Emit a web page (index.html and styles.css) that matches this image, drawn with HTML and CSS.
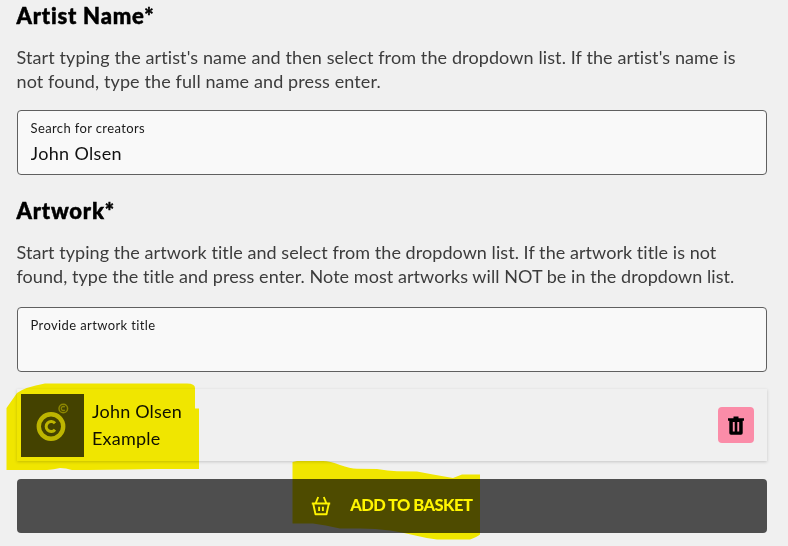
FILE: index.html
```html
<!DOCTYPE html>
<html lang="en">
  <head>
    <meta charset="UTF-8" />
    <meta name="viewport" content="width=device-width, initial-scale=1.0" />
    <title>Artwork Licence Request</title>
    <link rel="stylesheet" href="styles.css">
  </head>
  <body>
    <form class="artwork-form">
      <h2>Artist Name*</h2>
      <p class="help help-artist">
        Start typing the artist's name and then select from the dropdown list. If the artist's name is<br />
        not found, type the full name and press enter.
      </p>
      <div class="field">
        <label for="creator">Search for creators</label>
        <input type="text" id="creator" name="creator" value="John Olsen" />
      </div>

      <h2 class="heading-artwork">Artwork*</h2>
      <p class="help help-artwork">
        Start typing the artwork title and select from the dropdown list. If the artwork title is not<br />
        found, type the title and press enter. Note most artworks will NOT be in the dropdown list.
      </p>
      <div class="field">
        <label for="artwork">Provide artwork title</label>
        <input type="text" id="artwork" name="artwork" />
      </div>

      <div class="item">
        <svg class="thumb" viewBox="0 0 63 63">
          <rect width="63" height="63" fill="#444" />
          <g fill="none" stroke="#bdbdbd">
            <circle cx="30" cy="32.5" r="12.2" stroke-width="4.4" />
            <path d="M34 29.3a5 5 0 1 0 0 6.4" stroke-width="3" />
            <circle cx="42.3" cy="14.5" r="4.3" stroke="#8c8c8c" stroke-width="1.5" />
            <path d="M43.8 13.2a2 2 0 1 0 0 2.6" stroke="#8c8c8c" stroke-width="1.3" />
          </g>
        </svg>
        <div class="item-text">
          <div>John Olsen</div>
          <div>Example</div>
        </div>
        <button type="button" class="delete" aria-label="Delete">
          <svg width="16" height="19" viewBox="0 0 16 19">
            <path fill="#000" fill-rule="evenodd" d="M5.5 .5h5v1.7H16v2.6h-1.3V17q0 1.7-1.7 1.7H3Q1.3 18.700 1.3 17V4.800H0V2.200h5.500zM4.800 6v9.500h1.900V6zM9.300 6v9.500h1.900V6z" />
          </svg>
        </button>
      </div>

      <button type="submit" class="basket">
        <svg width="20" height="20" viewBox="0 0 20 20" fill="none" stroke="#fff" stroke-width="1.9" stroke-linejoin="round">
          <path d="M.8 7.5h18.400M2.200 7.500l2.300 10.700h11l2.300-10.700M4.600 7.500L7.200 1M15.400 7.500L12.800 1M8.100 10.700v4.300M11.900 10.700v4.300" />
        </svg>
        <span>ADD TO BASKET</span>
      </button>
    </form>

    <!-- Highlighter strokes -->
    <svg class="highlight" viewBox="0 0 788 546">
      <path d="M6.500 408L17 393Q25 387 45 383.500H187Q195 383.500 195 388V408.500H199V469L155 469Q100 470 72 470Q66 468 60 468Q54 469.500 47 470H6.500z" />
      <path d="M292.500 462L297 461H323Q330 461 340 465Q350 468.500 357 468.800L377 469Q388 471 397 471.200L417 471.500L433 474.500L453 478L462 474.500H480V534.500Q477 537 470 539.500H437Q425 538 413 535Q402 532 390 530.500Q375 528.500 360 528.500H340Q325 525 313 523.500H292.500z" />
    </svg>
  </body>
</html>
```

FILE: styles.css
```css
* {
  box-sizing: border-box;
}

body {
  margin: 0;
  height: 546px;
  overflow: hidden;
  background-color: #f0f0f0;
  font-family: Lato, "Open Sans", sans-serif;
  color: #111;
}

.artwork-form {
  display: flex;
  flex-direction: column;
  padding: 2px 21px 0 16.5px;
}

h2 {
  margin: 0;
  font-size: 22px;
  line-height: 28px;
  font-weight: 900;
  letter-spacing: 0.8px;
  -webkit-text-stroke: 0.5px #000;
  color: #000;
}

.heading-artwork {
  margin-top: 22px;
}

.help {
  margin: 16px 0 17px;
  font-size: 18px;
  line-height: 23.5px;
  color: #3c3c3c;
  white-space: nowrap;
}

.help-artist {
  letter-spacing: 0.11px;
}

.help-artwork {
  margin-bottom: 19px;
  letter-spacing: 0.055px;
}

.field {
  display: flex;
  flex-direction: column;
  height: 65px;
  padding: 9px 13px 0;
  border: 1px solid #606060;
  border-radius: 4px;
  background-color: #f9f9f9;
}

.field label {
  font-size: 13px;
  line-height: 17px;
  letter-spacing: 0.38px;
  color: #1a1a1a;
}

.field input {
  height: 24px;
  margin-top: 4px;
  padding: 0;
  border: 0;
  outline: 0;
  background: transparent;
  font-family: inherit;
  font-size: 18px;
  letter-spacing: 0.35px;
  color: #111;
}

.item {
  display: flex;
  align-items: center;
  height: 72px;
  margin-top: 17px;
  padding: 0 13.5px 0 4.5px;
  background-color: #f0f0f0;
  box-shadow: 0 1px 3px rgba(0, 0, 0, 0.18);
}

.thumb {
  width: 63px;
  height: 63px;
}

.item-text {
  flex: 1;
  margin-left: 8px;
  font-size: 18px;
  line-height: 27px;
  letter-spacing: 0.2px;
}

.delete {
  display: flex;
  align-items: center;
  justify-content: center;
  width: 36px;
  height: 36px;
  padding: 0;
  border: 0;
  border-radius: 4px;
  background-color: #fb8ca8;
}

.basket {
  display: flex;
  align-items: center;
  justify-content: center;
  gap: 19px;
  height: 54px;
  margin-top: 18px;
  padding: 0;
  border: 0;
  border-radius: 4px;
  background-color: #4e4e4e;
  color: #fff;
  font-family: inherit;
  font-size: 16.5px;
  font-weight: 900;
  letter-spacing: -0.55px;
}

.basket span {
  padding-bottom: 2px;
}

.highlight {
  position: absolute;
  top: 0;
  left: 0;
  width: 788px;
  height: 546px;
  fill: #fff500;
  mix-blend-mode: multiply;
  pointer-events: none;
}
```
